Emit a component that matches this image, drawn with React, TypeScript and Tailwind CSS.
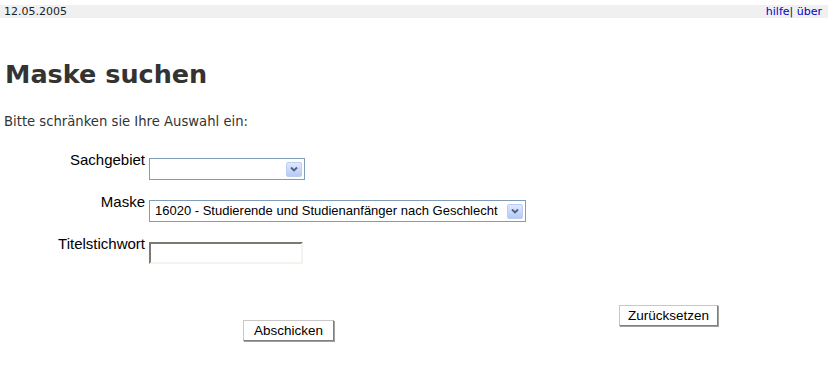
const Chevron = () => (
  <span className="flex h-[15px] w-[16px] items-center justify-center rounded-[2px] border border-[#b9cdf5] bg-gradient-to-b from-[#dfe8fd] to-[#b6c9f6]">
    <svg width="8" height="6" viewBox="0 0 8 6">
      <path d="M1 1.5 L4 4.5 L7 1.5" fill="none" stroke="#4d6185" strokeWidth="1.8" />
    </svg>
  </span>
);

const Select = ({ width, value }: { width: string; value?: string }) => (
  <div className={`${width} flex h-[22px] items-center justify-between border border-[#7f9db9] bg-white pl-[5px] pr-[2px] font-['Liberation_Sans',Arial,sans-serif] text-[13px] text-black`}>
    <span className="whitespace-nowrap">{value}</span>
    <Chevron />
  </div>
);

const Row = ({ label, children }: { label: string; children: React.ReactNode }) => (
  <div className="flex items-start">
    <div className="w-[145px] text-right font-['Liberation_Sans',Arial,sans-serif] text-[15px] leading-[16px] text-black">
      {label}
    </div>
    <div className="ml-[4px] pt-[6px]">{children}</div>
  </div>
);

const Button = ({ label, className }: { label: string; className: string }) => (
  <button
    className={`${className} h-[21px] border border-[#c8c8c8] border-b-[#808080] border-r-[#808080] bg-white font-['Liberation_Sans',Arial,sans-serif] text-[13.5px] leading-[19px] text-black shadow-[1px_1px_0_#a0a0a0]`}
  >
    {label}
  </button>
);

export default function App() {
  return (
    <div className="min-h-[389px] w-[828px] bg-white font-['DejaVu_Sans',Verdana,sans-serif] text-[#333]">
      <div className="mt-[5px] flex h-[13px] items-center justify-between bg-[#f0f0f0] px-[4px] text-[11px] leading-[13px]">
        <span className="text-[#222]">12.05.2005</span>
        <span className="pr-[2px]">
          <a className="text-[#0000cc]">hilfe</a>
          <span className="text-[#222]">| </span>
          <a className="text-[#0000cc]">über</a>
        </span>
      </div>

      <h1 className="ml-[5px] mt-[41px] text-[25.5px] font-bold leading-[30px] text-[#333]">Maske suchen</h1>

      <p className="ml-[4px] mt-[25px] text-[13.2px] leading-[15px] text-[#333]">Bitte schränken sie Ihre Auswahl ein:</p>

      <div className="mt-[23px] flex flex-col gap-[14px]">
        <Row label="Sachgebiet">
          <Select width="w-[156px]" />
        </Row>
        <Row label="Maske">
          <Select width="w-[377px]" value="16020 - Studierende und Studienanfänger nach Geschlecht" />
        </Row>
        <Row label="Titelstichwort">
          <div className="h-[22px] w-[154px] border-2 border-[#7a7a70] border-b-[#f4f4ee] border-r-[#f4f4ee] bg-white" />
        </Row>
      </div>

      <div className="mt-[41px] flex items-start">
        <Button label="Abschicken" className="ml-[243px] mt-[15px] w-[91px]" />
        <Button label="Zurücksetzen" className="ml-[285px] w-[99px]" />
      </div>
    </div>
  );
}
